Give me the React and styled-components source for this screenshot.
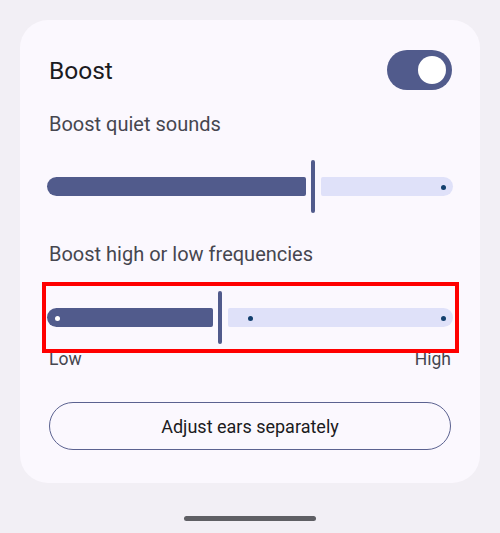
import React from 'react';
import styled, { createGlobalStyle } from 'styled-components';

const GlobalStyle = createGlobalStyle`
  html, body {
    margin: 0;
    padding: 0;
    background: #f2eff5;
  }
  body {
    font-family: 'Roboto', 'Noto Sans', sans-serif;
  }
`;

const Screen = styled.div`
  width: 500px;
  height: 533px;
  display: flex;
  flex-direction: column;
  align-items: center;
  background: #f2eff5;
`;

const Card = styled.div`
  box-sizing: border-box;
  width: 460px;
  margin-top: 20px;
  padding: 30px 29px 33px;
  background: #fbf8fe;
  border-radius: 28px;
  display: flex;
  flex-direction: column;
`;

const Header = styled.div`
  display: flex;
  align-items: center;
  justify-content: space-between;
  height: 40px;
  margin-right: -1px;
`;

const Title = styled.h2`
  margin: 0;
  font-size: 24.5px;
  font-weight: 400;
  color: #1b1b21;
`;

const Toggle = styled.div`
  box-sizing: border-box;
  width: 65px;
  height: 40px;
  border-radius: 20px;
  background: #515b8c;
  display: flex;
  align-items: center;
  justify-content: flex-end;
  padding-right: 6px;
`;

const Thumb = styled.div`
  width: 28px;
  height: 28px;
  border-radius: 50%;
  background: #ffffff;
`;

const Label = styled.div`
  margin-top: ${(p) => p.$top}px;
  font-size: 20px;
  line-height: 24px;
  color: #46464f;
`;

const SliderRow = styled.div`
  position: relative;
  height: 53px;
  margin: ${(p) => p.$top}px -2px 0;
  display: flex;
  align-items: center;
`;

const Active = styled.div`
  height: 19px;
  background: #515b8c;
  border-radius: 10px 2px 2px 10px;
`;

const Handle = styled.div`
  width: 4px;
  height: 53px;
  margin: 0 6px 0 5px;
  border-radius: 2px;
  background: #515b8c;
`;

const Inactive = styled.div`
  flex: 1;
  height: 19px;
  background: #dfe1f9;
  border-radius: 2px 10px 10px 2px;
`;

const Dot = styled.span`
  position: absolute;
  top: 50%;
  width: 5px;
  height: 5px;
  margin: -2px 0 0 -2.5px;
  border-radius: 50%;
  background: ${(p) => (p.$light ? '#ffffff' : '#123f6e')};
`;

const Frame = styled.div`
  position: absolute;
  top: -9px;
  bottom: -9px;
  left: -5px;
  right: -6px;
  border: 4px solid #ff0000;
  pointer-events: none;
`;

const Scale = styled.div`
  display: flex;
  justify-content: space-between;
  margin-top: 5px;
  font-size: 17.5px;
  line-height: 20px;
  color: #46464f;
`;

const OutlineButton = styled.button`
  margin-top: 33px;
  height: 48px;
  border: 1px solid #5b6290;
  border-radius: 24px;
  background: transparent;
  font-family: 'Roboto', 'Noto Sans', sans-serif;
  font-size: 18px;
  color: #1b1b21;
  cursor: pointer;
`;

const HomeBar = styled.div`
  width: 132px;
  height: 5px;
  margin-top: 33px;
  border-radius: 3px;
  background: #5f5f64;
`;

// width of the track row is 406px, stops sit 10px in from each end
const TRACK = 406;
const stopX = (f) => 10 + f * (TRACK - 20);

const Slider = ({ value, stops, lightStops = [], top, framed }) => (
  <SliderRow $top={top}>
    <Active style={{ width: value }} />
    <Handle />
    <Inactive />
    {stops.map((f) => (
      <Dot key={f} style={{ left: stopX(f) }} $light={lightStops.includes(f)} />
    ))}
    {framed && <Frame />}
  </SliderRow>
);

export default function App() {
  return (
    <Screen>
      <GlobalStyle />
      <Card>
        <Header>
          <Title>Boost</Title>
          <Toggle>
            <Thumb />
          </Toggle>
        </Header>
        <Label $top={22}>Boost quiet sounds</Label>
        <Slider value={259} stops={[1]} top={24} />
        <Label $top={29}>Boost high or low frequencies</Label>
        <Slider value={166} stops={[0, 0.5, 1]} lightStops={[0]} top={25} framed />
        <Scale>
          <span>Low</span>
          <span>High</span>
        </Scale>
        <OutlineButton>Adjust ears separately</OutlineButton>
      </Card>
      <HomeBar />
    </Screen>
  );
}
